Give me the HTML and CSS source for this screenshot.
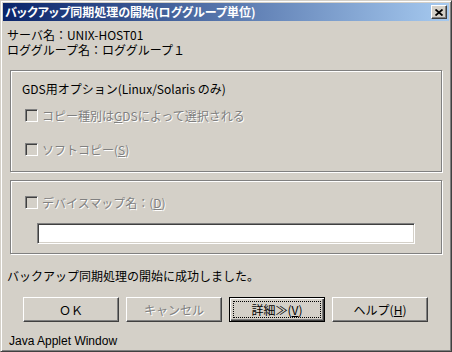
FILE: index.html
```html
<!DOCTYPE html>
<html lang="ja">
<head>
    <meta charset="UTF-8">
    <title>バックアップ同期処理の開始(ロググループ単位)</title>
    <link rel="stylesheet" href="styles.css">
</head>
<body>
    <div class="window">
        <div class="titlebar">
            <span class="title">バックアップ同期処理の開始(ロググループ単位)</span>
            <button class="close">
                <svg width="8" height="7" viewBox="0 0 8 7">
                    <path d="M0.5 0.5 L7.5 6.5 M7.5 0.5 L0.5 6.5" stroke="#000" stroke-width="1.8" fill="none"/>
                </svg>
            </button>
        </div>
        <div class="content">
            <div class="info">
                <div>サーバ名：UNIX-HOST01</div>
                <div>ロググループ名：ロググループ１</div>
            </div>

            <div class="group group-gds">
                <div class="group-title">GDS用オプション(Linux/Solaris のみ)</div>
                <label class="check disabled first"><span class="box"></span>コピー種別は<u>G</u>DSによって選択される</label>
                <label class="check disabled second"><span class="box"></span>ソフトコピー(<u>S</u>)</label>
            </div>

            <div class="group group-map">
                <label class="check disabled"><span class="box"></span>デバイスマップ名：(<u>D</u>)</label>
                <div class="field"></div>
            </div>

            <div class="message">バックアップ同期処理の開始に成功しました。</div>

            <div class="buttons">
                <button class="btn">ＯＫ</button>
                <button class="btn disabled">キャンセル</button>
                <button class="btn default">詳細≫(<u>V</u>)</button>
                <button class="btn">ヘルプ(<u>H</u>)</button>
            </div>

            <div class="footer">Java Applet Window</div>
        </div>
    </div>
</body>
</html>
```

FILE: styles.css
```css
body {
    margin: 0;
    background-color: #D4D0C8;
    font-family: "Noto Sans CJK JP", sans-serif;
    font-size: 12px;
    color: #000;
}
.window {
    width: 452px;
    height: 352px;
    box-sizing: border-box;
    padding: 2px;
    border: 1px solid;
    border-color: #D4D0C8 #404040 #404040 #D4D0C8;
    box-shadow: inset 1px 1px #fff, inset -1px -1px #808080;
    background-color: #D4D0C8;
}
.titlebar {
    height: 18px;
    display: flex;
    align-items: center;
    justify-content: space-between;
    padding-left: 2px;
    background: linear-gradient(to right, #0A246A, #A6CAF0);
}
.title {
    color: #fff;
    font-weight: bold;
    font-size: 12px;
    line-height: 18px;
    font-feature-settings: "palt";
    white-space: nowrap;
}
.close {
    width: 16px;
    height: 14px;
    margin-right: 2px;
    padding: 0;
    display: flex;
    align-items: center;
    justify-content: center;
    background-color: #D4D0C8;
    border: 1px solid;
    border-color: #fff #404040 #404040 #fff;
    box-shadow: inset -1px -1px #808080;
}
.content {
    padding: 6px 8px 0 4px;
}
.info {
    line-height: 15px;
}
.group {
    box-sizing: border-box;
    margin-left: 3px;
    width: 432px;
    border: 1px solid #808080;
    box-shadow: inset 1px 1px #fff, 1px 1px #fff;
    padding-left: 11px;
}
.group-gds {
    margin-top: 13px;
    height: 102px;
    padding-top: 10px;
}
.group-title {
    line-height: 15px;
    white-space: nowrap;
}
.check {
    display: flex;
    align-items: center;
    height: 15px;
    margin-left: 3px;
    white-space: nowrap;
}
.check.first {
    margin-top: 12px;
}
.check.second {
    margin-top: 19px;
}
.check .box {
    width: 13px;
    height: 13px;
    box-sizing: border-box;
    margin-right: 4px;
    border: 1px solid;
    border-color: #808080 #fff #fff #808080;
    box-shadow: inset 1px 1px #404040, inset -1px -1px #D4D0C8;
    background-color: #D4D0C8;
    flex-shrink: 0;
}
.disabled {
    color: #808080;
    text-shadow: 1px 1px #fff;
}
.group-map {
    margin-top: 8px;
    height: 74px;
    padding-top: 14px;
}
.field {
    box-sizing: border-box;
    width: 378px;
    height: 21px;
    margin-top: 13px;
    margin-left: 15px;
    background-color: #fff;
    border: 1px solid;
    border-color: #808080 #fff #fff #808080;
    box-shadow: inset 1px 1px #404040, inset -1px -1px #D4D0C8;
}
.message {
    margin-top: 14px;
    line-height: 15px;
    white-space: nowrap;
}
.buttons {
    display: flex;
    gap: 7px;
    margin-top: 14px;
    padding-left: 16px;
}
.btn {
    width: 96px;
    height: 25px;
    padding: 0;
    font-family: "Noto Sans CJK JP", sans-serif;
    font-size: 12px;
    color: #000;
    background-color: #D4D0C8;
    border: 1px solid;
    border-color: #fff #404040 #404040 #fff;
    box-shadow: inset -1px -1px #808080;
}
.btn.disabled {
    color: #808080;
    text-shadow: 1px 1px #fff;
}
.btn.default {
    border-color: #000;
    box-shadow: inset 1px 1px #fff, inset -1px -1px #404040, inset -2px -2px #808080;
    outline: 1px dotted #000;
    outline-offset: -5px;
}
.footer {
    margin-top: 12px;
    line-height: 14px;
    padding-left: 2px;
    font-family: "Liberation Sans", sans-serif;
    font-size: 12px;
}
```
